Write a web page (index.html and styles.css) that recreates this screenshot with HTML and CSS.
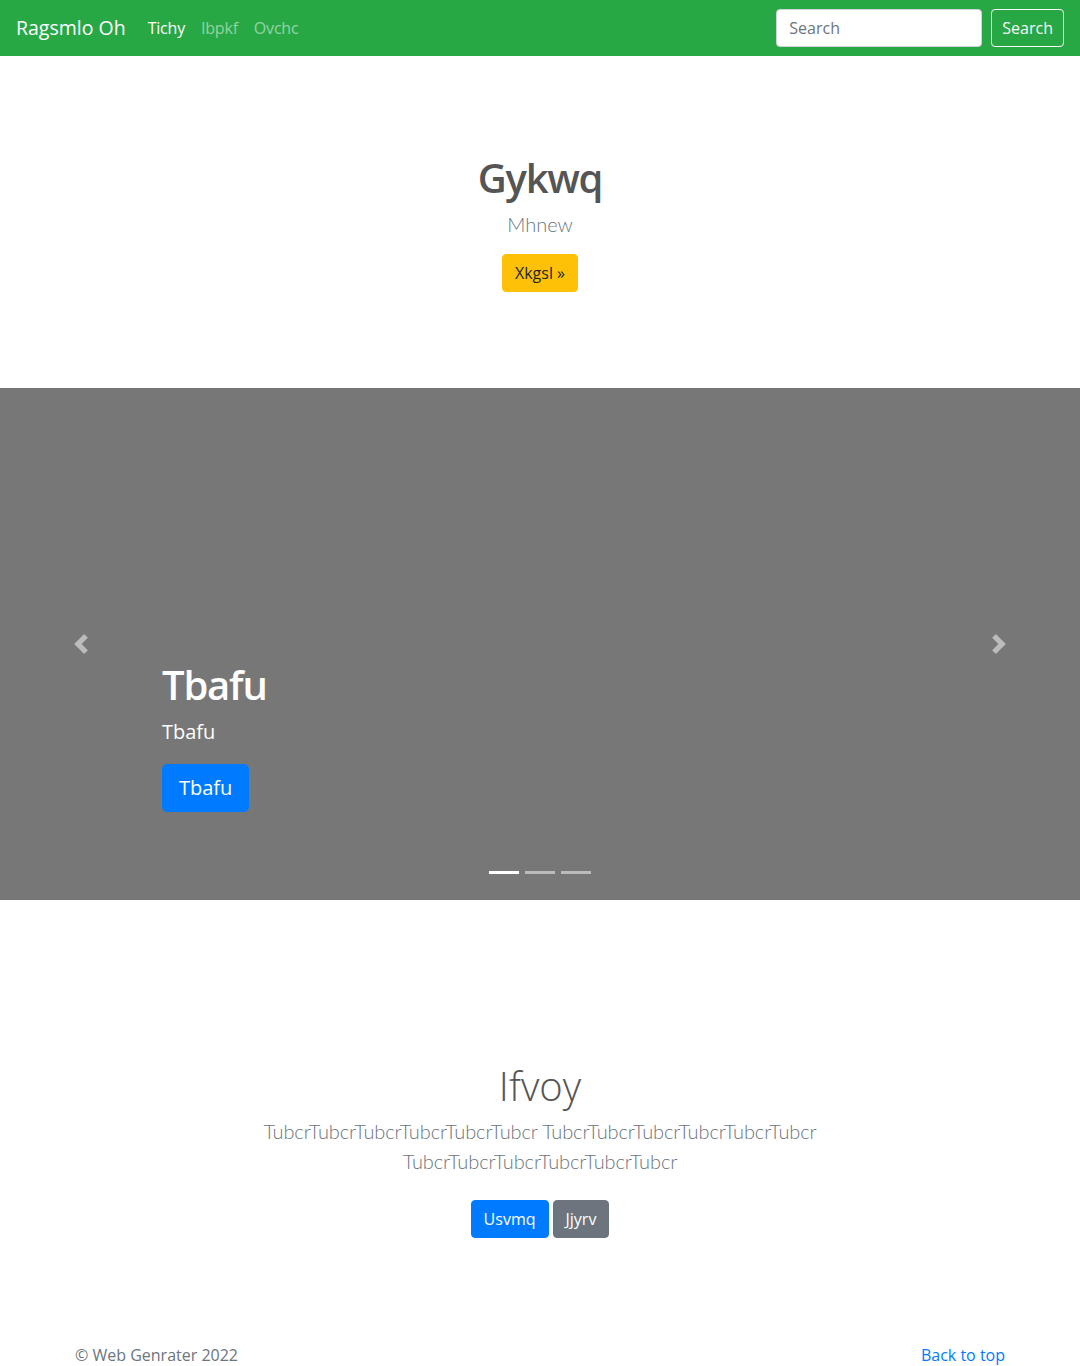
FILE: index.html
```html
<!DOCTYPE html>
<html lang="en">
<head>
<meta charset="utf-8">
<title>Ragsmlo Oh</title>
<link rel="stylesheet" href="styles.css">
</head>
<body>
<header class="navbar">
  <a class="brand" href="#">Ragsmlo Oh</a>
  <nav class="nav">
    <a class="nav-link active" href="#">Tichy</a>
    <a class="nav-link" href="#">Ibpkf</a>
    <a class="nav-link" href="#">Ovchc</a>
  </nav>
  <form class="search">
    <input class="search-input" type="text" placeholder="Search">
    <button class="btn btn-outline-light" type="button">Search</button>
  </form>
</header>

<section class="hero">
  <h1 class="hero-title">Gykwq</h1>
  <p class="hero-lead">Mhnew</p>
  <a class="btn btn-warning" href="#">Xkgsl &raquo;</a>
</section>

<section class="carousel">
  <a class="carousel-control prev" href="#">
    <svg width="20" height="20" viewBox="0 0 8 8"><path fill="#fff" d="M5.25 0l-4 4 4 4 1.5-1.5L4.25 4l2.5-2.5L5.25 0z"/></svg>
  </a>
  <div class="carousel-caption">
    <h1 class="caption-title">Tbafu</h1>
    <p class="caption-text">Tbafu</p>
    <a class="btn btn-lg btn-primary" href="#">Tbafu</a>
  </div>
  <a class="carousel-control next" href="#">
    <svg width="20" height="20" viewBox="0 0 8 8"><path fill="#fff" d="M2.75 0l-1.5 1.5L3.75 4l-2.5 2.5L2.75 8l4-4-4-4z"/></svg>
  </a>
  <ol class="indicators">
    <li class="indicator active"></li>
    <li class="indicator"></li>
    <li class="indicator"></li>
  </ol>
</section>

<section class="album">
  <h1 class="album-title">Ifvoy</h1>
  <p class="album-lead">TubcrTubcrTubcrTubcrTubcrTubcr TubcrTubcrTubcrTubcrTubcrTubcr TubcrTubcrTubcrTubcrTubcrTubcr</p>
  <div class="album-actions">
    <a class="btn btn-primary" href="#">Usvmq</a>
    <a class="btn btn-secondary" href="#">Jjyrv</a>
  </div>
</section>

<footer class="footer">
  <p class="copy">&copy; Web Genrater 2022</p>
  <a class="back" href="#">Back to top</a>
</footer>
</body>
</html>
```

FILE: styles.css
```css
* { box-sizing: border-box; }
html, body { margin: 0; padding: 0; }
body {
  font-family: "Segoe UI", "Open Sans", "Noto Sans", sans-serif;
  font-size: 16px;
  line-height: 1.5;
  color: #212529;
  background: #fff;
}
a { text-decoration: none; }
h1, p { margin: 0; }

.navbar {
  height: 56px;
  background: #28a745;
  display: flex;
  align-items: center;
  padding: 0 16px;
}
.brand {
  color: #fff;
  font-size: 19.5px;
  line-height: 30px;
  margin-right: 14px;
}
.nav { display: flex; flex: 1; }
.nav-link {
  color: rgba(255,255,255,.5);
  padding: 8px;
  font-size: 16px;
  letter-spacing: -0.2px;
}
.nav-link.active { color: #fff; }
.search { display: flex; align-items: center; }
.search-input {
  width: 206px;
  height: 38px;
  border: 1px solid #ced4da;
  border-radius: 4px;
  padding: 6px 12px;
  font: inherit;
  font-size: 16px;
  margin-right: 9px;
  color: #495057;
}
.search-input::placeholder { color: #6c757d; }

.btn {
  display: inline-block;
  font: inherit;
  font-size: 16px;
  line-height: 24px;
  padding: 6px 12px;
  border: 1px solid transparent;
  border-radius: 4px;
  background: transparent;
  cursor: pointer;
}
.btn-outline-light { color: #f8f9fa; border-color: #f8f9fa; padding: 6px 10px; }
.btn-warning { background: #ffc107; border-color: #ffc107; color: #212529; }
.btn-primary { background: #007bff; border-color: #007bff; color: #fff; }
.btn-secondary { background: #6c757d; border-color: #6c757d; color: #fff; }
.btn-lg { font-size: 20px; line-height: 30px; padding: 8px 16px; border-radius: 5px; }

.hero {
  height: 332px;
  padding-top: 98px;
  display: flex;
  flex-direction: column;
  align-items: center;
}
.hero-title {
  font-size: 40px;
  line-height: 48px;
  font-weight: 600;
  letter-spacing: -1.3px;
  color: #555;
}
.hero-lead {
  font-family: "Lato", "Open Sans", sans-serif;
  font-size: 20px;
  line-height: 30px;
  font-weight: 300;
  color: #6c757d;
  margin-top: 7px;
  margin-bottom: 15px;
}

.carousel {
  position: relative;
  height: 512px;
  background: #777;
  display: flex;
  align-items: center;
}
.carousel-control {
  width: 15%;
  align-self: stretch;
  display: flex;
  align-items: center;
  justify-content: center;
  opacity: .5;
}
.carousel-control svg { display: block; }
.carousel-caption {
  flex: 1;
  align-self: flex-end;
  padding-bottom: 88px;
  color: #fff;
}
.caption-title {
  font-size: 40px;
  line-height: 48px;
  font-weight: 600;
  letter-spacing: -1.2px;
}
.caption-text {
  font-size: 20px;
  line-height: 30px;
  margin-top: 8px;
  margin-bottom: 17px;
}
.indicators {
  position: absolute;
  left: 0;
  right: 0;
  bottom: 26px;
  margin: 0;
  padding: 0;
  list-style: none;
  display: flex;
  justify-content: center;
  gap: 6px;
}
.indicator {
  width: 30px;
  height: 3px;
  background: #fff;
  opacity: .5;
}
.indicator.active { opacity: 1; }

.album {
  padding-top: 162px;
  padding-bottom: 57px;
  display: flex;
  flex-direction: column;
  align-items: center;
  text-align: center;
}
.album-title {
  font-size: 40px;
  line-height: 48px;
  font-weight: 300;
  color: #555;
}
.album-lead {
  font-family: "Lato", "Open Sans", sans-serif;
  max-width: 600px;
  font-size: 20px;
  line-height: 30px;
  font-weight: 300;
  letter-spacing: -0.1px;
  color: #6c757d;
  margin-top: 6px;
  margin-bottom: 24px;
}
.album-actions { display: flex; gap: 4px; }

.footer {
  width: 960px;
  margin: 0 auto;
  padding: 48px 15px 48px;
  display: flex;
  justify-content: space-between;
  color: #6c757d;
}
.back { color: #007bff; }
```
